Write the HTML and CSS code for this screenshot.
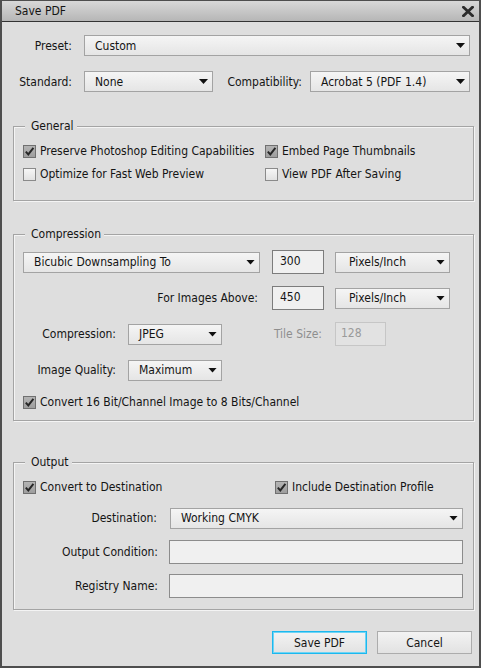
FILE: index.html
```html
<!DOCTYPE html>
<html>
<head>
<meta charset="utf-8">
<title>Save PDF</title>
<link rel="stylesheet" href="styles.css">
</head>
<body>
<div class="window">
  <div class="titlebar">
    <span class="title">Save PDF</span>
    <svg class="close" width="12" height="11" viewBox="0 0 12 11"><path d="M1.5 1.2 L10.5 9.8 M10.5 1.2 L1.5 9.8" stroke="#2b2b2b" stroke-width="2.8" stroke-linecap="square"/></svg>
  </div>
  <div class="content">
    <div class="row r-preset">
      <span class="lbl lbl-top">Preset:</span>
      <div class="select w-preset"><span>Custom</span><i class="arrow"></i></div>
    </div>
    <div class="row r-standard">
      <span class="lbl lbl-top">Standard:</span>
      <div class="select w-standard"><span>None</span><i class="arrow"></i></div>
      <span class="lbl lbl-compat">Compatibility:</span>
      <div class="select w-compat"><span>Acrobat 5 (PDF 1.4)</span><i class="arrow"></i></div>
    </div>

    <fieldset class="group g-general">
      <legend>General</legend>
      <div class="inner">
        <div class="row r-chk r-gen1">
          <label class="check c-gen"><span class="box on"><svg width="11" height="11" viewBox="0 0 11 11"><path d="M1.8 5.6 L4.3 8.4 L9.4 1.8" fill="none" stroke="#262626" stroke-width="1.9"/></svg></span>Preserve Photoshop Editing Capabilities</label>
          <label class="check"><span class="box on"><svg width="11" height="11" viewBox="0 0 11 11"><path d="M1.8 5.6 L4.3 8.4 L9.4 1.8" fill="none" stroke="#262626" stroke-width="1.9"/></svg></span>Embed Page Thumbnails</label>
        </div>
        <div class="row r-chk r-gen2">
          <label class="check c-gen"><span class="box"></span>Optimize for Fast Web Preview</label>
          <label class="check"><span class="box"></span>View PDF After Saving</label>
        </div>
      </div>
    </fieldset>

    <fieldset class="group g-comp">
      <legend>Compression</legend>
      <div class="inner">
        <div class="row r-c1">
          <div class="select w-bicubic"><span>Bicubic Downsampling To</span><i class="arrow"></i></div>
          <div class="input w-num">300</div>
          <div class="select w-unit"><span>Pixels/Inch</span><i class="arrow"></i></div>
        </div>
        <div class="row r-c2">
          <span class="lbl lbl-above">For Images Above:</span>
          <div class="input w-num">450</div>
          <div class="select w-unit"><span>Pixels/Inch</span><i class="arrow"></i></div>
        </div>
        <div class="row r-c3">
          <span class="lbl lbl-comp">Compression:</span>
          <div class="select w-small"><span>JPEG</span><i class="arrow"></i></div>
          <span class="lbl lbl-tile">Tile Size:</span>
          <div class="input w-tile disabled">128</div>
        </div>
        <div class="row r-c4">
          <span class="lbl lbl-comp">Image Quality:</span>
          <div class="select w-small"><span>Maximum</span><i class="arrow"></i></div>
        </div>
        <div class="row r-chk r-c5">
          <label class="check"><span class="box on"><svg width="11" height="11" viewBox="0 0 11 11"><path d="M1.8 5.6 L4.3 8.4 L9.4 1.8" fill="none" stroke="#262626" stroke-width="1.9"/></svg></span>Convert 16 Bit/Channel Image to 8 Bits/Channel</label>
        </div>
      </div>
    </fieldset>

    <fieldset class="group g-out">
      <legend>Output</legend>
      <div class="inner">
        <div class="row r-chk r-o1">
          <label class="check c-out"><span class="box on"><svg width="11" height="11" viewBox="0 0 11 11"><path d="M1.8 5.6 L4.3 8.4 L9.4 1.8" fill="none" stroke="#262626" stroke-width="1.9"/></svg></span>Convert to Destination</label>
          <label class="check"><span class="box on"><svg width="11" height="11" viewBox="0 0 11 11"><path d="M1.8 5.6 L4.3 8.4 L9.4 1.8" fill="none" stroke="#262626" stroke-width="1.9"/></svg></span>Include Destination Profile</label>
        </div>
        <div class="row r-o2">
          <span class="lbl lbl-out">Destination:</span>
          <div class="select w-dest"><span>Working CMYK</span><i class="arrow"></i></div>
        </div>
        <div class="row r-o3">
          <span class="lbl lbl-out lbl-out-in">Output Condition:</span>
          <div class="input w-text"></div>
        </div>
        <div class="row r-o4">
          <span class="lbl lbl-out lbl-out-in">Registry Name:</span>
          <div class="input w-text"></div>
        </div>
      </div>
    </fieldset>

    <div class="buttons">
      <div class="btn primary">Save PDF</div>
      <div class="btn">Cancel</div>
    </div>
  </div>
</div>
</body>
</html>
```

FILE: styles.css
```css
* { box-sizing: border-box; }
html, body { margin: 0; padding: 0; }
body {
  background: #dedede;
  font-family: "DejaVu Sans Condensed", "DejaVu Sans", sans-serif;
  font-size: 12px;
  color: #141414;
}
.window {
  width: 481px;
  height: 668px;
  border: 2px solid #4e4e4e;
  border-top-width: 1px;
  background: #dedede;
  display: flex;
  flex-direction: column;
}
.titlebar {
  height: 21px;
  flex: none;
  border-bottom: 1px solid #333;
  background: linear-gradient(#d8d8d8, #b6b6b6);
  display: flex;
  align-items: center;
  justify-content: space-between;
  padding: 0 5px 0 13px;
}
.title { font-size: 12px; }
.content { flex: 1; display: flex; flex-direction: column; }
.row { display: flex; align-items: center; }
.r-preset { margin-top: 13px; }
.r-standard { margin-top: 15px; }
.lbl { white-space: nowrap; }
.lbl-top { width: 70px; text-align: right; margin-right: 12px; }
.lbl-compat { flex: 1; text-align: right; margin-right: 8px; }

.select {
  height: 21px;
  flex: none;
  border: 1px solid #a3a3a3;
  background: linear-gradient(#f5f5f5, #e5e5e5);
  display: flex;
  align-items: center;
  justify-content: space-between;
  padding: 0 4px 0 10px;
  white-space: nowrap;
}
.arrow {
  display: block;
  width: 9px;
  height: 5px;
  background: #111;
  clip-path: polygon(0 0, 100% 0, 50% 100%);
}
.w-preset { width: 386px; }
.w-standard { width: 129px; }
.w-compat { width: 160px; margin-right: 9px; }

fieldset.group {
  margin: 0 5px 0 11px;
  padding: 0;
  min-width: 0;
  border: 1px solid #a4a4a4;
  box-shadow: inset 1px 1px 0 #f4f4f4, 1px 1px 0 #f4f4f4;
}
legend {
  margin-left: 11px;
  padding: 0 3px 0 6px;
  line-height: 14px;
  background: #dedede;
}
.inner { padding-left: 9px; }

.g-general { margin-top: 27px !important; }
.g-general .inner { padding-bottom: 16px; }
.r-chk { height: 20px; }
.r-gen1 { margin-top: 8px; }
.r-gen2 { margin-top: 3px; }

.check { display: flex; align-items: center; white-space: nowrap; }
.c-gen { width: 242px; }
.c-out { width: 252px; }
.box {
  width: 13px;
  height: 13px;
  flex: none;
  margin-right: 4px;
  border: 1px solid #8a8a8a;
  background: linear-gradient(#f6f6f6, #e2e2e2);
  display: flex;
  align-items: center;
  justify-content: center;
}
.box.on {
  border-color: #707070;
  background: linear-gradient(#b4b4b4, #9e9e9e);
}
.box svg { display: block; }

.g-comp { margin-top: 26px !important; }
.g-comp .inner { padding-bottom: 8px; }
.r-c1, .r-c2, .r-c3, .r-c4 { height: 24px; }
.r-c1 { margin-top: 9px; }
.r-c2, .r-c3, .r-c4 { margin-top: 12px; }
.r-c5 { margin-top: 10px; }
.w-bicubic { width: 237px; }
.w-num { width: 52px; margin-left: 12px; }
.w-unit { width: 115px; margin-left: 11px; padding-left: 13px; }
.lbl-above { width: 237px; text-align: right; padding-right: 2px; }
.lbl-comp { width: 93px; text-align: right; margin-right: 12px; }
.w-small { width: 94px; }
.lbl-tile { width: 100px; text-align: right; margin-right: 13px; color: #8e8e8e; }
.w-tile { width: 51px; }

.input {
  height: 24px;
  flex: none;
  border: 1px solid #7c7c7c;
  background: #f0f0f0;
  padding: 3px 0 0 7px;
  line-height: 14px;
}
.input.disabled {
  border-color: #c6c6c6;
  background: #e2e2e2;
  color: #9a9a9a;
  padding-left: 5px;
}

.g-out { margin-top: 34px !important; }
.g-out .inner { padding-bottom: 11px; }
.r-o1 { margin-top: 8px; }
.r-o2, .r-o3, .r-o4 { height: 24px; }
.r-o2 { margin-top: 9px; }
.r-o3, .r-o4 { margin-top: 10px; }
.lbl-out { width: 135px; text-align: right; margin-right: 12px; padding-right: 1px; }
.lbl-out-in { margin-right: 11px; padding-right: 0; }
.w-dest { width: 293px; }
.w-text { width: 294px; border-color: #8c8c8c; }

.buttons {
  display: flex;
  justify-content: flex-end;
  gap: 10px;
  margin: 21px 7px 0 0;
}
.btn {
  width: 95px;
  height: 23px;
  border: 1px solid #acacac;
  background: linear-gradient(#f3f3f3, #e2e2e2);
  display: flex;
  align-items: center;
  justify-content: center;
}
.btn.primary {
  border-color: #1cb8ee;
  box-shadow: inset 0 0 0 1px #6fd4f5;
}
```
